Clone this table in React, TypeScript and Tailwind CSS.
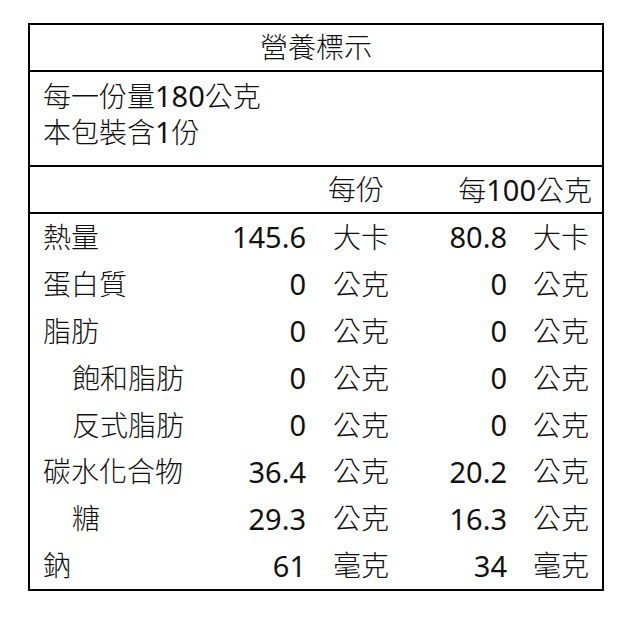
import React from "react";

// 營養標示資料
const rows = [
  { name: "熱量", indent: false, v1: "145.6", u1: "大卡", v2: "80.8", u2: "大卡" },
  { name: "蛋白質", indent: false, v1: "0", u1: "公克", v2: "0", u2: "公克" },
  { name: "脂肪", indent: false, v1: "0", u1: "公克", v2: "0", u2: "公克" },
  { name: "飽和脂肪", indent: true, v1: "0", u1: "公克", v2: "0", u2: "公克" },
  { name: "反式脂肪", indent: true, v1: "0", u1: "公克", v2: "0", u2: "公克" },
  { name: "碳水化合物", indent: false, v1: "36.4", u1: "公克", v2: "20.2", u2: "公克" },
  { name: "糖", indent: true, v1: "29.3", u1: "公克", v2: "16.3", u2: "公克" },
  { name: "鈉", indent: false, v1: "61", u1: "毫克", v2: "34", u2: "毫克" },
];

// 數字用較粗、稍大的字
const Num = ({ children }: { children: React.ReactNode }) => (
  <span className="font-normal text-[29px]">{children}</span>
);

const App = () => {
  return (
    <div
      className="w-[635px] h-[635px] bg-white pt-[23px] pl-[28px] text-[#111] text-[28px] leading-[35px] font-light"
      style={{ fontFamily: '"Noto Sans", "Noto Sans CJK TC", sans-serif' }}
    >
      <div className="w-[576px] border-2 border-black flex flex-col">
        {/* --- 標題 --- */}
        <div className="h-[47px] flex items-center justify-center border-b-2 border-black">
          營養標示
        </div>

        {/* --- 份量 --- */}
        <div className="h-[95px] border-b-2 border-black pl-[13px] pt-[6px]">
          <div>
            每一份量<Num>180</Num>公克
          </div>
          <div>
            本包裝含<Num>1</Num>份
          </div>
        </div>

        {/* --- 欄位標題 --- */}
        <div className="h-[47px] flex items-center border-b-2 border-black">
          <span className="ml-[298px]">每份</span>
          <span className="ml-auto mr-[10px]">
            每<Num>100</Num>公克
          </span>
        </div>

        {/* --- 營養素 --- */}
        <div className="flex flex-col pl-[13px]">
          {rows.map((r) => (
            <div
              key={r.name}
              className="h-[46.9px] grid grid-cols-[150px_113px_83px_118px_82px] items-center"
            >
              <span className={r.indent ? "pl-[29px]" : ""}>{r.name}</span>
              <span className="text-right">
                <Num>{r.v1}</Num>
              </span>
              <span className="pl-[27px]">{r.u1}</span>
              <span className="text-right">
                <Num>{r.v2}</Num>
              </span>
              <span className="pl-[26px]">{r.u2}</span>
            </div>
          ))}
        </div>
      </div>
    </div>
  );
};

export default App;
